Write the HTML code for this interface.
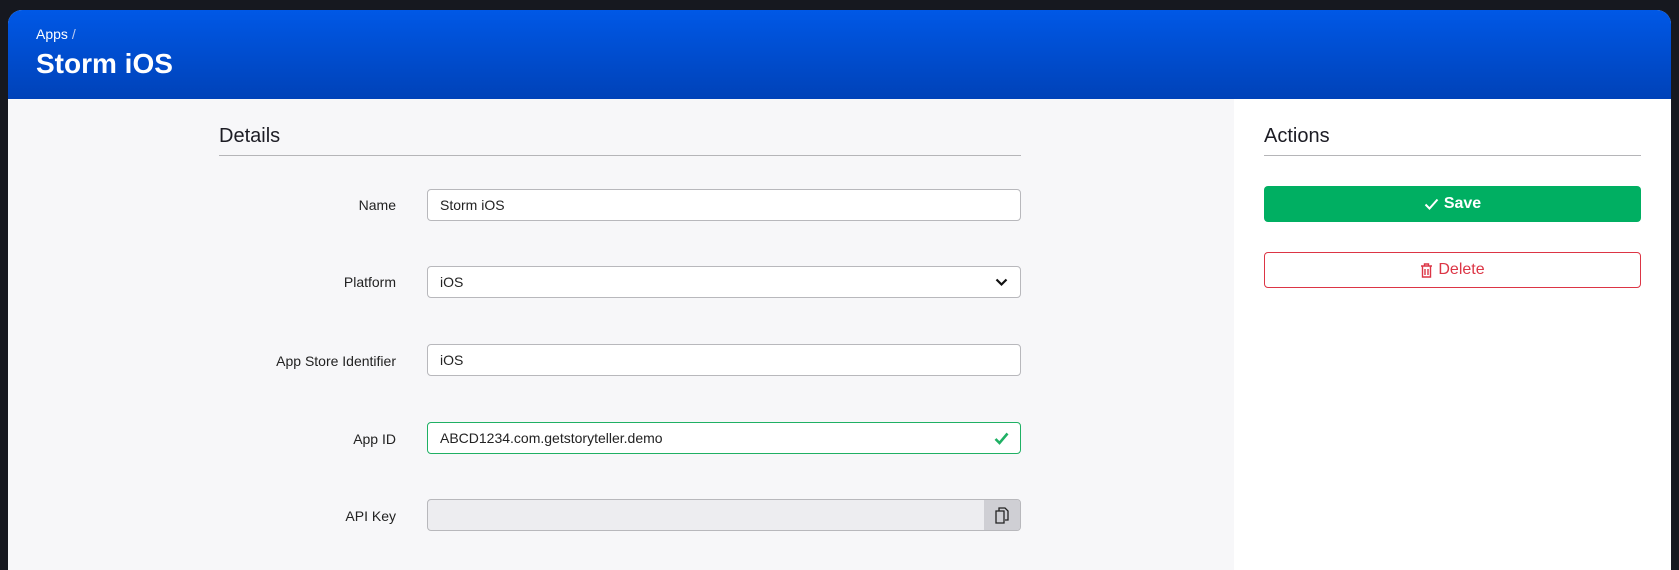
<!DOCTYPE html>
<html><head><meta charset="utf-8"><style>
*{box-sizing:border-box;margin:0;padding:0}
body{width:1679px;height:554px;background:#16181f;font-family:"Liberation Sans",sans-serif;overflow:hidden;position:relative}
.panel{position:absolute;left:8px;top:10px;width:1663px;height:560px;border-radius:14px 14px 0 0;overflow:hidden;background:#f7f7f9}
.hdr{position:absolute;left:0;top:0;width:100%;height:89px;background:linear-gradient(#0058e6,#0042b8)}
.crumb{position:absolute;left:28px;top:16px;color:#fff;font-size:14px}
.crumb span{color:#b8c9f0}
.title{position:absolute;left:28px;top:38px;color:#fff;font-size:28px;font-weight:bold}
.side{position:absolute;left:1226px;top:89px;right:0;bottom:0;background:#fff}
h2{position:absolute;font-weight:normal;font-size:20px;color:#1c1c24}
.line{position:absolute;height:1px;background:#b5b5b8}
.lbl{position:absolute;right:1275px;font-size:14px;color:#222;text-align:right;width:300px}
.in{position:absolute;left:419px;width:594px;height:32px;background:#fff;border:1px solid #b8b8bc;border-radius:4px;font-size:14px;color:#222;padding:8px 12px;line-height:14px}
.btn{position:absolute;left:1256px;width:377px;height:36px;border-radius:4px;font-size:16px;font-weight:bold;display:flex;align-items:center;justify-content:center;gap:5px}
</style></head><body>
<div class="panel">
<div class="hdr"><div class="crumb">Apps <span>/</span></div><div class="title">Storm iOS</div></div>
<div class="side"></div>
<h2 style="left:211px;top:115px">Details</h2>
<div class="line" style="left:211px;top:145px;width:802px"></div>
<h2 style="left:1256px;top:115px">Actions</h2>
<div class="line" style="left:1256px;top:145px;width:377px"></div>

<div class="lbl" style="top:187px">Name</div>
<div class="in" style="top:179px">Storm iOS</div>
<div class="lbl" style="top:264px">Platform</div>
<div class="in" style="top:256px">iOS<svg style="position:absolute;right:12px;top:11px" width="13" height="9" viewBox="0 0 13 9"><path d="M1.5 1.5l5 5 5-5" fill="none" stroke="#111" stroke-width="2.2"/></svg></div>
<div class="lbl" style="top:343px">App Store Identifier</div>
<div class="in" style="top:334px">iOS</div>
<div class="lbl" style="top:421px">App ID</div>
<div class="in" style="top:412px;border-color:#1fb064">ABCD1234.com.getstoryteller.demo<svg style="position:absolute;right:11px;top:9px" width="15" height="13" viewBox="0 0 15 13"><path d="M1.5 7l4 4 8-9.5" fill="none" stroke="#1fb064" stroke-width="2.6"/></svg></div>
<div class="lbl" style="top:498px">API Key</div>
<div class="in" style="top:489px;background:#ededf0;overflow:hidden"><div style="position:absolute;right:0;top:0;width:36px;height:100%;background:#cfcfd4"><svg style="position:absolute;left:11px;top:7px" width="14" height="17" viewBox="0 0 14 17"><path d="M4 4V1h6l3 3v9h-3M1 4h8v12H1z" fill="none" stroke="#222" stroke-width="1.3"/></svg></div></div>

<div class="btn" style="top:176px;background:#00af62;color:#fff"><svg width="15" height="12" viewBox="0 0 15 12"><path d="M1.5 6.5l4 4 8-9" fill="none" stroke="#fff" stroke-width="2"/></svg>Save</div>
<div class="btn" style="top:242px;background:#fff;border:1px solid #dc3545;color:#dc3545;font-weight:normal"><svg width="13" height="15" viewBox="0 0 13 15"><path d="M1 3h11M4.5 3V1h4v2M2.5 3v11h8V3M5 6v6M8 6v6" fill="none" stroke="#dc3545" stroke-width="1.4"/></svg>Delete</div>
</div>
</body></html>
